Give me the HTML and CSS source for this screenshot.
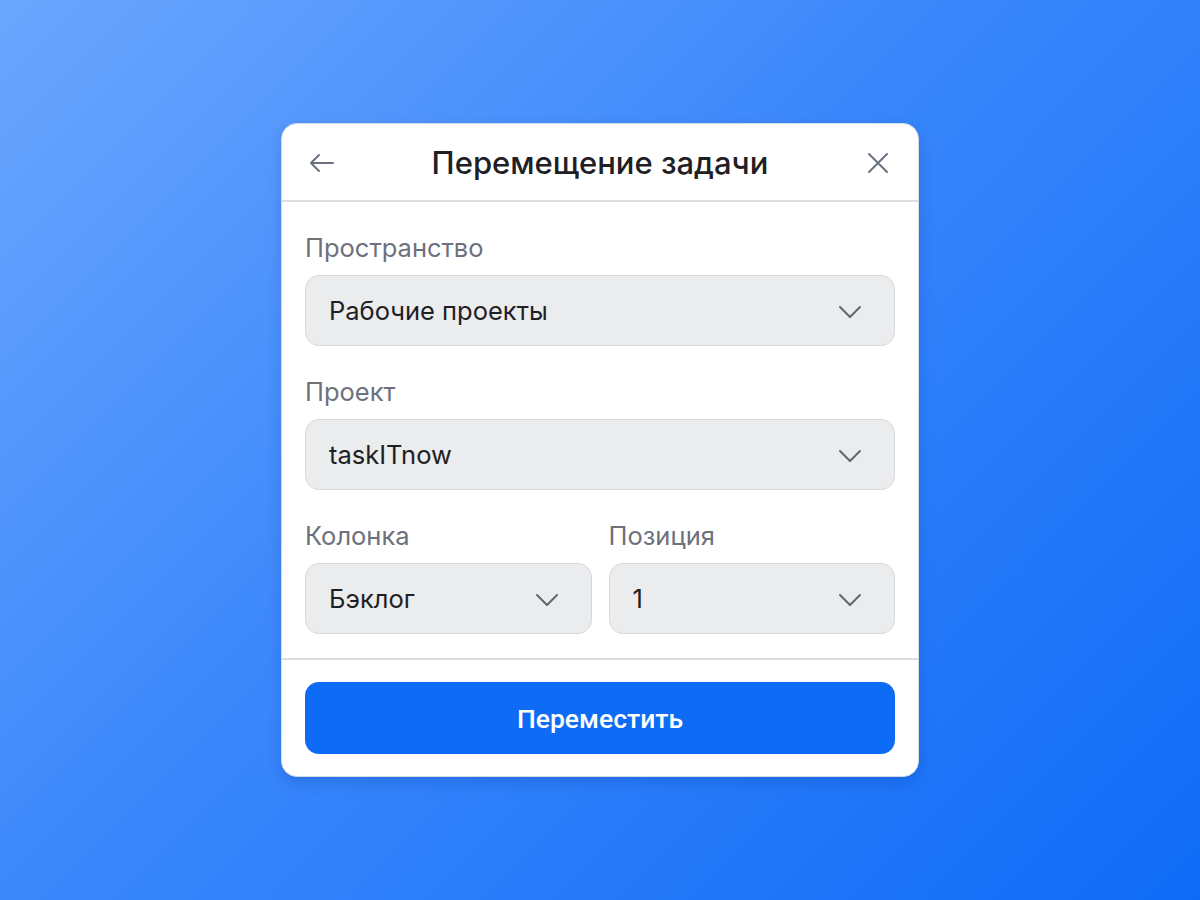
FILE: index.html
```html
<!DOCTYPE html>
<html lang="ru">
<head>
    <meta charset="UTF-8">
    <meta name="viewport" content="width=device-width, initial-scale=1.0">
    <title>Перемещение задачи</title>
    <link rel="stylesheet" href="styles.css">
</head>
<body>
    <div class="modal">
        <div class="modal-header">
            <button type="button" class="icon-btn" aria-label="Назад">
                <svg width="28" height="28" viewBox="0 0 28 28" fill="none" stroke="currentColor" stroke-width="2" stroke-linecap="round" stroke-linejoin="round">
                    <path d="M25 14H3M11 6L3 14L11 22"/>
                </svg>
            </button>
            <h1>Перемещение задачи</h1>
            <button type="button" class="icon-btn" aria-label="Закрыть">
                <svg width="28" height="28" viewBox="0 0 28 28" fill="none" stroke="currentColor" stroke-width="2" stroke-linecap="round">
                    <path d="M5 5L23 23M23 5L5 23"/>
                </svg>
            </button>
        </div>

        <div class="modal-body">
            <div class="form-group">
                <label>Пространство</label>
                <div class="select">
                    <span>Рабочие проекты</span>
                    <svg class="chevron" width="24" height="24" viewBox="0 0 24 24" fill="none" stroke="currentColor" stroke-width="2" stroke-linecap="round" stroke-linejoin="round"><path d="M2 7L12 17L22 7"/></svg>
                </div>
            </div>
            <div class="form-group">
                <label>Проект</label>
                <div class="select">
                    <span>taskITnow</span>
                    <svg class="chevron" width="24" height="24" viewBox="0 0 24 24" fill="none" stroke="currentColor" stroke-width="2" stroke-linecap="round" stroke-linejoin="round"><path d="M2 7L12 17L22 7"/></svg>
                </div>
            </div>
            <div class="form-row">
                <div class="form-group">
                    <label>Колонка</label>
                    <div class="select">
                        <span>Бэклог</span>
                        <svg class="chevron" width="24" height="24" viewBox="0 0 24 24" fill="none" stroke="currentColor" stroke-width="2" stroke-linecap="round" stroke-linejoin="round"><path d="M2 7L12 17L22 7"/></svg>
                    </div>
                </div>
                <div class="form-group">
                    <label>Позиция</label>
                    <div class="select">
                        <span>1</span>
                        <svg class="chevron" width="24" height="24" viewBox="0 0 24 24" fill="none" stroke="currentColor" stroke-width="2" stroke-linecap="round" stroke-linejoin="round"><path d="M2 7L12 17L22 7"/></svg>
                    </div>
                </div>
            </div>
        </div>

        <div class="modal-footer">
            <button type="button" class="primary-btn">Переместить</button>
        </div>
    </div>
</body>
</html>
```

FILE: styles.css
```css
body {
    font-family: Inter, "Noto Sans", sans-serif;
    margin: 0;
    padding: 0;
    width: 1200px;
    height: 900px;
    background: linear-gradient(135deg, #6ba6fe 0%, #3a87fb 45%, #0f6bf7 100%);
    display: flex;
    justify-content: center;
    align-items: flex-start;
}
.modal {
    margin-top: 123px;
    width: 636px;
    background-color: #ffffff;
    border: 1px solid #d5dbe5;
    border-radius: 16px;
    box-shadow: 0 6px 14px rgba(0, 40, 120, 0.18);
    overflow: hidden;
}
.modal-header {
    height: 78px;
    display: flex;
    align-items: center;
    justify-content: space-between;
    padding: 0 24px 0 24px;
    border-bottom: 2px solid #dcdee2;
    box-sizing: border-box;
}
.modal-header h1 {
    margin: 1px 0 0;
    font-size: 31px;
    font-weight: 500;
    color: #1f2024;
    letter-spacing: 0;
}
.icon-btn {
    width: 32px;
    height: 32px;
    padding: 0;
    border: none;
    background: none;
    color: #6b7180;
    display: flex;
    align-items: center;
    justify-content: center;
    margin-top: 1px;
}
.modal-body {
    padding: 30px 23px 24px 23px;
    display: flex;
    flex-direction: column;
    gap: 30px;
    border-bottom: 2px solid #dcdee2;
}
.form-group {
    display: flex;
    flex-direction: column;
    gap: 11px;
}
.form-group label {
    font-size: 25.5px;
    line-height: 32px;
    color: #6c717c;
}
.form-row {
    display: grid;
    grid-template-columns: 1fr 1fr;
    gap: 17px;
}
.select {
    height: 71px;
    box-sizing: border-box;
    background-color: #ebecee;
    border: 1.5px solid #d6d8dc;
    border-radius: 14px;
    display: flex;
    align-items: center;
    justify-content: space-between;
    padding: 0 32px 0 23px;
    font-size: 25.5px;
    color: #1f2024;
}
.chevron {
    color: #616673;
    margin-top: 2px;
}
.modal-footer {
    padding: 22px 23px 22px 23px;
}
.primary-btn {
    width: 100%;
    height: 72px;
    border: none;
    border-radius: 14px;
    background-color: #0e6bf6;
    color: #ffffff;
    font-family: Roboto, Inter, sans-serif;
    font-size: 26.5px;
    font-weight: 500;
    cursor: pointer;
}
```
